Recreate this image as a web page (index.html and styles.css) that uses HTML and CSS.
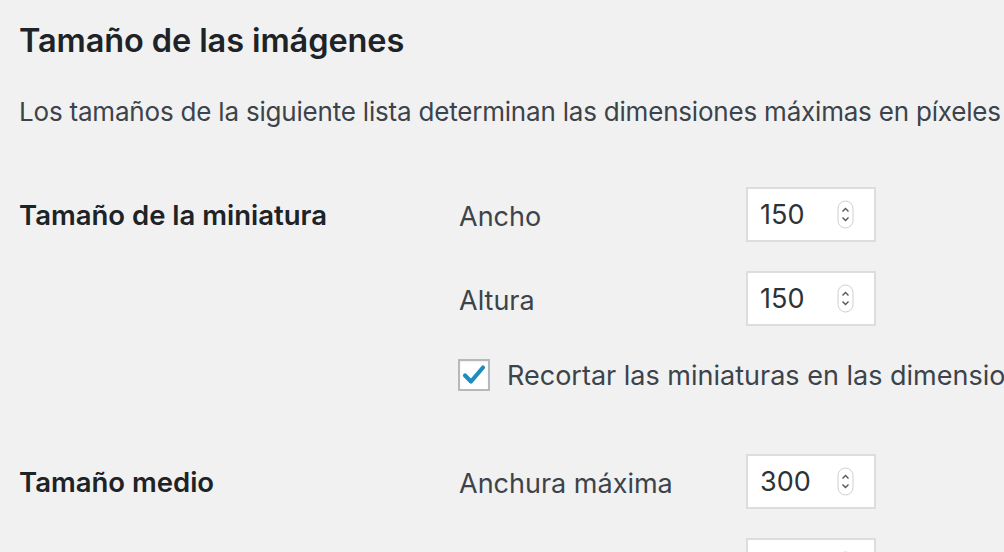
FILE: index.html
```html
<!DOCTYPE html>
<html lang="es">
<head>
<meta charset="utf-8">
<title>Ajustes de medios</title>
<link rel="stylesheet" href="styles.css">
</head>
<body>
<div class="wrap">
  <h2 class="title">Tamaño de las imágenes</h2>
  <p class="intro">Los tamaños de la siguiente lista determinan las dimensiones máximas en píxeles que se usarán al añadir una imagen a la biblioteca de medios.</p>

  <div class="section section-thumb">
    <div class="section-label">Tamaño de la miniatura</div>
    <div class="fields">
      <div class="field-row">
        <span class="field-label">Ancho</span>
        <div class="num-input"><span class="num-value">150</span>
          <svg class="spinner" width="17" height="29" viewBox="0 0 17 29"><rect x="1" y="1" width="15" height="27" rx="7.5" fill="#fff" stroke="#cfcfcf" stroke-width="1"/><path d="M5.5 11.5 L8.5 8.5 L11.5 11.5" fill="none" stroke="#555" stroke-width="1.4"/><path d="M5.5 17.5 L8.5 20.5 L11.5 17.5" fill="none" stroke="#555" stroke-width="1.4"/></svg>
        </div>
      </div>
      <div class="field-row">
        <span class="field-label">Altura</span>
        <div class="num-input"><span class="num-value">150</span>
          <svg class="spinner" width="17" height="29" viewBox="0 0 17 29"><rect x="1" y="1" width="15" height="27" rx="7.5" fill="#fff" stroke="#cfcfcf" stroke-width="1"/><path d="M5.5 11.5 L8.5 8.5 L11.5 11.5" fill="none" stroke="#555" stroke-width="1.4"/><path d="M5.5 17.5 L8.5 20.5 L11.5 17.5" fill="none" stroke="#555" stroke-width="1.4"/></svg>
        </div>
      </div>
      <div class="check-row">
        <span class="checkbox">
          <svg width="28" height="28" viewBox="0 0 28 28"><path d="M5 14.5 L11 20.5 L23 6.5" fill="none" stroke="#1e8cbe" stroke-width="4.2" stroke-linecap="round" stroke-linejoin="round"/></svg>
        </span>
        <span class="check-label">Recortar las miniaturas en las dimensiones exactas (normalmente las miniaturas son proporcionales)</span>
      </div>
    </div>
  </div>

  <div class="section section-medium">
    <div class="section-label">Tamaño medio</div>
    <div class="fields">
      <div class="field-row">
        <span class="field-label">Anchura máxima</span>
        <div class="num-input"><span class="num-value">300</span>
          <svg class="spinner" width="17" height="29" viewBox="0 0 17 29"><rect x="1" y="1" width="15" height="27" rx="7.5" fill="#fff" stroke="#cfcfcf" stroke-width="1"/><path d="M5.5 11.5 L8.5 8.5 L11.5 11.5" fill="none" stroke="#555" stroke-width="1.4"/><path d="M5.5 17.5 L8.5 20.5 L11.5 17.5" fill="none" stroke="#555" stroke-width="1.4"/></svg>
        </div>
      </div>
      <div class="field-row">
        <span class="field-label">Altura máxima</span>
        <div class="num-input"><span class="num-value">300</span>
          <svg class="spinner" width="17" height="29" viewBox="0 0 17 29"><rect x="1" y="1" width="15" height="27" rx="7.5" fill="#fff" stroke="#cfcfcf" stroke-width="1"/><path d="M5.5 11.5 L8.5 8.5 L11.5 11.5" fill="none" stroke="#555" stroke-width="1.4"/><path d="M5.5 17.5 L8.5 20.5 L11.5 17.5" fill="none" stroke="#555" stroke-width="1.4"/></svg>
        </div>
      </div>
    </div>
  </div>
</div>
</body>
</html>
```

FILE: styles.css
```css
html, body {
  margin: 0;
  padding: 0;
  background: #f1f1f1;
  overflow: hidden;
}

body {
  font-family: Inter, "Noto Sans", "Liberation Sans", sans-serif;
  color: #3c434a;
}

.wrap {
  padding: 21px 0 0 19px;
  width: 1600px;
}

.title {
  margin: 0;
  font-size: 32.5px;
  line-height: 40px;
  font-weight: 600;
  color: #1d2327;
  letter-spacing: -0.1px;
}

.intro {
  margin: 33px 0 0;
  font-size: 26px;
  line-height: 36px;
  color: #3c434a;
  white-space: nowrap;
  letter-spacing: -0.2px;
}

.section {
  display: grid;
  grid-template-columns: 440px 1fr;
}

.section-thumb {
  margin-top: 57px;
}

.section-medium {
  margin-top: 59px;
}

.section-label {
  height: 55px;
  display: flex;
  align-items: center;
  font-size: 27.5px;
  font-weight: 600;
  color: #1d2327;
}

.fields {
  display: flex;
  flex-direction: column;
  gap: 29px;
}

.field-row {
  display: flex;
  align-items: center;
  height: 55px;
}

.field-label {
  width: 287px;
  font-size: 27px;
  color: #3c434a;
  padding-top: 3px;
}

.num-input {
  box-sizing: border-box;
  width: 130px;
  height: 55px;
  border: 2px solid #dddddd;
  background: #fff;
  display: flex;
  align-items: center;
  padding-left: 12px;
  padding-right: 20px;
  justify-content: space-between;
}

.num-value {
  font-size: 27px;
  color: #2c3338;
}

.spinner {
  display: block;
}

.check-row {
  display: flex;
  align-items: center;
  height: 40px;
  white-space: nowrap;
}

.checkbox {
  box-sizing: border-box;
  width: 32px;
  height: 32px;
  border: 2px solid #b4b9be;
  background: #fff;
  display: flex;
  align-items: center;
  justify-content: center;
  margin-left: -1px;
  margin-right: 17px;
  box-shadow: inset 0 1px 2px rgba(0,0,0,0.08);
}

.checkbox svg {
  display: block;
}

.check-label {
  font-size: 27px;
  color: #3c434a;
}
```
